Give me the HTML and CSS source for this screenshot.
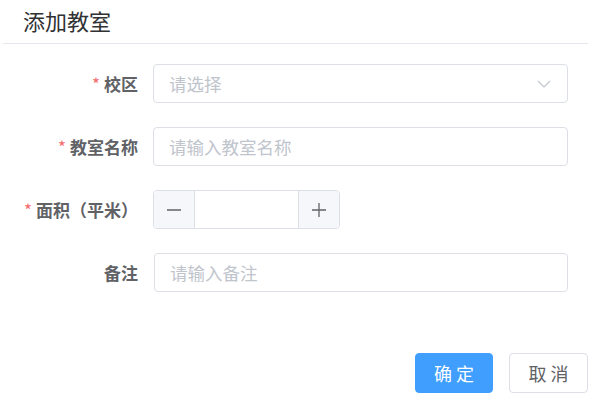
FILE: index.html
```html
<!DOCTYPE html>
<html lang="zh-CN">
<head>
    <meta charset="UTF-8">
    <meta name="viewport" content="width=device-width, initial-scale=1.0">
    <title>添加教室</title>
    <link rel="stylesheet" href="styles.css">
</head>
<body>
    <div class="dialog">
        <div class="dialog-header">
            <span class="dialog-title">添加教室</span>
        </div>

        <div class="dialog-body">
            <div class="form-item">
                <label class="form-label is-required">校区</label>
                <div class="form-content">
                    <div class="select">
                        <input type="text" class="input" placeholder="请选择" readonly>
                        <svg class="select-arrow" width="14" height="8" viewBox="0 0 14 8">
                            <path d="M1 1 L7 7 L13 1" fill="none" stroke="#c0c4cc" stroke-width="1.2"/>
                        </svg>
                    </div>
                </div>
            </div>

            <div class="form-item">
                <label class="form-label is-required">教室名称</label>
                <div class="form-content">
                    <input type="text" class="input" placeholder="请输入教室名称">
                </div>
            </div>

            <div class="form-item">
                <label class="form-label is-required">面积（平米）</label>
                <div class="form-content">
                    <div class="input-number">
                        <span class="input-number-btn minus">
                            <svg width="16" height="16" viewBox="0 0 16 16">
                                <path d="M1 8 H15" stroke="#606266" stroke-width="1.3"/>
                            </svg>
                        </span>
                        <input type="text" class="input-number-inner">
                        <span class="input-number-btn plus">
                            <svg width="16" height="16" viewBox="0 0 16 16">
                                <path d="M1 8 H15 M8 1 V15" stroke="#606266" stroke-width="1.3"/>
                            </svg>
                        </span>
                    </div>
                </div>
            </div>

            <div class="form-item">
                <label class="form-label">备注</label>
                <div class="form-content remark">
                    <input type="text" class="input" placeholder="请输入备注">
                </div>
            </div>
        </div>

        <div class="dialog-footer">
            <button class="btn btn-primary">确定</button>
            <button class="btn">取消</button>
        </div>
    </div>
</body>
</html>
```

FILE: styles.css
```css
body {
    margin: 0;
    background-color: #fff;
    font-family: "Noto Sans CJK SC", "Noto Sans", sans-serif;
}
.dialog {
    width: 595px;
}
.dialog-header {
    margin: 0 7px 0 3px;
    height: 44px;
    padding: 0 20px;
    border-bottom: 1px solid #e4e7ed;
    box-sizing: border-box;
    display: flex;
    align-items: center;
}
.dialog-title {
    font-size: 22px;
    color: #303133;
    line-height: 26px;
    margin-top: -4px;
}
.dialog-body {
    padding-top: 20px;
}
.form-item {
    display: flex;
    align-items: center;
    height: 39px;
    margin-bottom: 24px;
}
.form-label {
    width: 138px;
    text-align: right;
    font-size: 17px;
    font-weight: bold;
    color: #606266;
}
.form-label.is-required::before {
    content: "*";
    color: #f56c6c;
    font-weight: normal;
    margin-right: 4px;
}
.form-content {
    margin-left: 15px;
    width: 415px;
}
.form-content.remark {
    margin-left: 16px;
    width: 414px;
}
.input {
    width: 100%;
    height: 39px;
    box-sizing: border-box;
    padding: 0 15px;
    border: 1px solid #dcdfe6;
    border-radius: 4px;
    font-size: 17.5px;
    font-family: inherit;
    color: #606266;
    outline: none;
}
.input::placeholder {
    color: #c0c4cc;
}
.select {
    position: relative;
}
.select-arrow {
    position: absolute;
    right: 17px;
    top: 16px;
}
.input-number {
    display: flex;
    width: 187px;
    height: 39px;
    border: 1px solid #dcdfe6;
    border-radius: 4px;
    box-sizing: border-box;
    overflow: hidden;
}
.input-number-btn {
    width: 40px;
    background-color: #f5f7fa;
    display: flex;
    align-items: center;
    justify-content: center;
}
.input-number-btn.minus {
    border-right: 1px solid #dcdfe6;
}
.input-number-btn.plus {
    border-left: 1px solid #dcdfe6;
}
.input-number-inner {
    flex: 1;
    min-width: 0;
    border: none;
    outline: none;
    font-size: 17px;
    text-align: center;
}
.dialog-footer {
    display: flex;
    justify-content: flex-end;
    gap: 16px;
    padding-top: 37px;
    margin-right: 7px;
}
.btn {
    width: 79px;
    height: 40px;
    border: 1px solid #dcdfe6;
    border-radius: 4px;
    background-color: #fff;
    color: #606266;
    font-size: 18px;
    font-family: inherit;
    letter-spacing: 4px;
    text-indent: 4px;
    cursor: pointer;
}
.btn-primary {
    width: 78px;
    background-color: #409eff;
    border-color: #409eff;
    color: #fff;
}
```
